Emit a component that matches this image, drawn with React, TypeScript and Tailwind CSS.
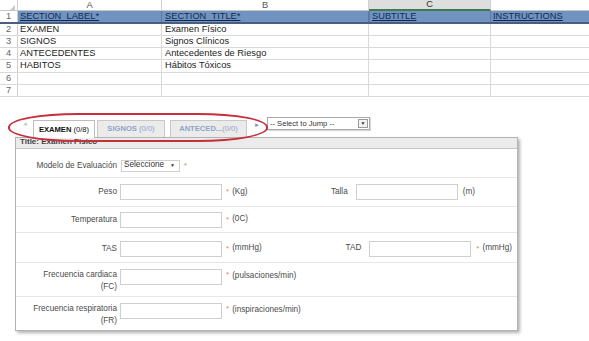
const SHEET_ROWS: [string, string][] = [
  ['EXAMEN', 'Examen Físico'],
  ['SIGNOS', 'Signos Clínicos'],
  ['ANTECEDENTES', 'Antecedentes de Riesgo'],
  ['HABITOS', 'Hábitos Tóxicos'],
  ['', ''],
  ['', ''],
]

const ROW_H = ['h-[12px]', 'h-[12px]', 'h-[12px]', 'h-[13px]', 'h-[12px]', 'h-[12px]']

function Sheet() {
  return (
    <div className="font-['Liberation_Sans',sans-serif] text-[9.3px] text-[#222]">
      {/* column letters */}
      <div className="grid grid-cols-[18px_144px_207px_122px_1fr] h-[11px] border-b border-[#c6c6c6] text-[#555]">
        <div className="border-r border-[#d0d0d0] relative">
          <span className="absolute right-[2px] bottom-[1px] w-0 h-0 border-l-[5px] border-l-transparent border-b-[5px] border-b-[#c8c8c8]" />
        </div>
        <div className="border-r border-[#d0d0d0] flex items-center justify-center leading-none">A</div>
        <div className="border-r border-[#d0d0d0] flex items-center justify-center leading-none">B</div>
        <div className="border-r border-[#d0d0d0] bg-[#dedede] border-b-2 border-b-[#3f7a55] flex items-center justify-center leading-none text-[#333]">C</div>
        <div />
      </div>
      {/* header row */}
      <div className="grid grid-cols-[18px_144px_207px_122px_1fr] h-[13px] border-b-2 border-[#4a5f80]">
        <div className="border-r border-[#d0d0d0] text-[#666] flex items-center justify-center leading-none">1</div>
        <div className="bg-[#7093c0] border-r border-[#5b7aa4] pl-[2px] flex items-center leading-none text-[#132a55] underline">SECTION_LABEL*</div>
        <div className="bg-[#7093c0] border-r border-[#5b7aa4] pl-[3px] flex items-center leading-none text-[#132a55] underline">SECTION_TITLE*</div>
        <div className="bg-[#7093c0] border-l border-[#2c4a3a] border-r border-[#5b7aa4] pl-[2px] flex items-center leading-none text-[#132a55] underline">SUBTITLE</div>
        <div className="bg-[#7093c0] pl-[2px] flex items-center leading-none text-[#132a55] underline">INSTRUCTIONS</div>
      </div>
      {SHEET_ROWS.map(([a, b], i) => (
        <div key={i} className={`grid grid-cols-[18px_144px_207px_122px_1fr] ${ROW_H[i]} border-b border-[#d9d9d9]`}>
          <div className="border-r border-[#d0d0d0] text-[#666] flex items-center justify-center leading-none">{i + 2}</div>
          <div className="border-r border-[#d9d9d9] pl-[2px] flex items-center leading-none">{a}</div>
          <div className="border-r border-[#d9d9d9] pl-[3px] flex items-center leading-none">{b}</div>
          <div className="border-r border-[#d9d9d9]" />
          <div />
        </div>
      ))}
    </div>
  )
}

function Input({ w = 'w-[102px]' }: { w?: string }) {
  return <div className={`${w} h-[16px] border border-[#cfcfcf] bg-white shrink-0`} />
}

function Star({ className = '' }: { className?: string }) {
  return <span className={`text-[#e8866a] text-[8px] ${className}`}>*</span>
}

function Label({ children }: { children: React.ReactNode }) {
  return <div className="w-[101px] shrink-0 text-right leading-[12px]">{children}</div>
}

function Tabs() {
  return (
    <div className="relative h-[40px] flex items-end pl-[22px] font-['Liberation_Sans',sans-serif] text-[7.6px]">
      <span className="mb-[10px] w-[11px] text-[6px] text-[#c4c4c4] leading-none">◄</span>
      <div className="h-[18px] w-[62px] bg-white border border-b-0 border-[#bdbdbd] flex items-center justify-center text-[#111] relative z-10 mb-[-1px]">
        <span className="font-bold">EXAMEN</span>&nbsp;(0/8)
      </div>
      <div className="ml-[2px] h-[17px] w-[68px] bg-[#ebebeb] border border-b-0 border-[#c8c8c8] flex items-center justify-center text-[#8fa3c6]">
        <span className="font-bold">SIGNOS</span>&nbsp;(0/0)
      </div>
      <div className="ml-[5px] h-[17px] w-[77px] bg-[#ebebeb] border border-b-0 border-[#c8c8c8] flex items-center justify-center text-[#8fa3c6]">
        <span className="font-bold">ANTECED...</span>(0/0)
      </div>
      <span className="ml-[7px] mb-[9px] text-[6px] text-[#7890b4] leading-none">►</span>
      <div className="ml-[7px] mb-[7px] w-[103px] h-[13px] border border-[#a9a9a9] bg-white flex items-center text-[#333] shadow-[1px_1px_1px_rgba(0,0,0,0.15)]">
        <span className="pl-[2px] flex-1 leading-none">-- Select to Jump --</span>
        <span className="w-[10px] h-[9px] mr-[1px] border border-[#9a9a9a] bg-[#f2f2f2] flex items-center justify-center text-[5px] leading-none">▼</span>
      </div>
      {/* red annotation */}
      <div className="absolute left-[8px] top-[16px] w-[260px] h-[29px] border-2 border-[#c6303a] rounded-[70px/14px] pointer-events-none z-20" />
    </div>
  )
}

function Panel() {
  return (
    <div className="ml-[15px] w-[503px] h-[194px] border border-[#b3b3b3] bg-white shadow-[2px_2px_3px_rgba(0,0,0,0.3)] font-['Liberation_Sans',sans-serif] text-[8.2px] text-[#4a4a4a]">
      <div className="h-[11px] bg-[#ebebeb] border-b border-[#c4c4c4] pl-[4px] flex items-start overflow-hidden">
        <span className="font-bold text-[#444] leading-[8px] text-[8px]">Title: Examen Fisico</span>
      </div>
      <div className="h-[29px] border-b border-[#e6e6e6] flex items-center pt-[5px]">
        <Label>Modelo de Evaluación</Label>
        <div className="ml-[4px] w-[59px] h-[12px] border border-[#cfcfcf] flex items-center text-[#333]">
          <span className="pl-[2px] flex-1 leading-none">Seleccione</span>
          <span className="mr-[4px] text-[5px] leading-none">▼</span>
        </div>
        <Star className="ml-[4px]" />
      </div>
      <div className="h-[29px] border-b border-[#e6e6e6] flex items-center">
        <Label>Peso</Label>
        <div className="ml-[3px]"><Input /></div>
        <Star className="ml-[4px]" />
        <span className="ml-[3px]">(Kg)</span>
        <div className="ml-auto flex items-center mr-[42px]">
          <span className="mr-[8px]">Talla</span>
          <Input />
          <span className="ml-[5px]">(m)</span>
        </div>
      </div>
      <div className="h-[26px] border-b border-[#e6e6e6] flex items-center">
        <Label>Temperatura</Label>
        <div className="ml-[3px]"><Input /></div>
        <Star className="ml-[4px]" />
        <span className="ml-[3px]">(0C)</span>
      </div>
      <div className="h-[30px] border-b border-[#e6e6e6] flex items-center pt-[2px]">
        <Label>TAS</Label>
        <div className="ml-[3px]"><Input /></div>
        <Star className="ml-[4px]" />
        <span className="ml-[3px]">(mmHg)</span>
        <div className="ml-auto flex items-center mr-[5px]">
          <span className="mr-[8px]">TAD</span>
          <Input />
          <Star className="ml-[5px]" />
          <span className="ml-[3px]">(mmHg)</span>
        </div>
      </div>
      <div className="h-[34px] border-b border-[#e6e6e6] flex items-start pt-[6px]">
        <Label>Frecuencia cardiaca<br />(FC)</Label>
        <div className="ml-[3px]"><Input /></div>
        <Star className="ml-[4px] leading-[12px]" />
        <span className="ml-[3px] leading-[14px]">(pulsaciones/min)</span>
      </div>
      <div className="h-[32px] flex items-start pt-[6px]">
        <Label>Frecuencia respiratoria<br />(FR)</Label>
        <div className="ml-[3px]"><Input /></div>
        <Star className="ml-[4px] leading-[12px]" />
        <span className="ml-[3px] leading-[14px]">(inspiraciones/min)</span>
      </div>
    </div>
  )
}

export default function App() {
  return (
    <div className="w-[589px] h-[341px] bg-white overflow-hidden">
      <Sheet />
      <Tabs />
      <Panel />
    </div>
  )
}
